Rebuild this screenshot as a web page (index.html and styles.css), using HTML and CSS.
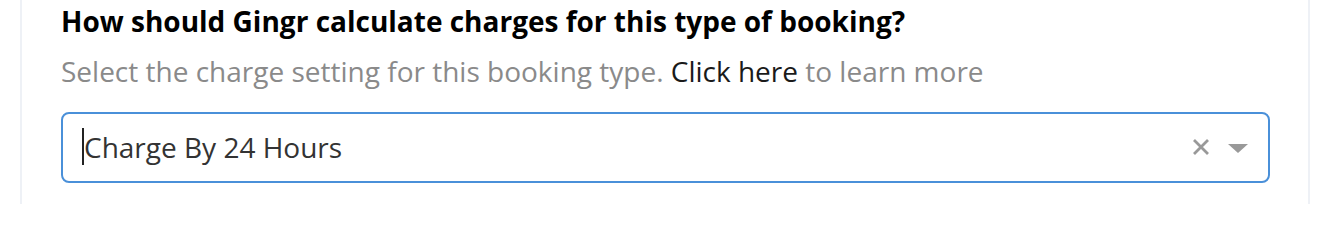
FILE: index.html
```html
<!DOCTYPE html>
<html>
<head>
<meta charset="utf-8">
<link rel="stylesheet" href="styles.css">
</head>
<body>
<div class="panel">
  <h2 class="title">How should Gingr calculate charges for this type of booking?</h2>
  <p class="hint">Select the charge setting for this booking type. <a class="link">Click here</a> to learn more</p>
  <div class="select">
    <span class="caret"></span>
    <span class="value">Charge By 24 Hours</span>
    <span class="icons">
      <svg class="clear" width="16" height="16" viewBox="0 0 16 16"><path d="M1 1L15 15M15 1L1 15" stroke="#999" stroke-width="2.8"/></svg>
      <svg class="arrow" width="20" height="9" viewBox="0 0 20 9"><path d="M0 0H20L10 9Z" fill="#999"/></svg>
    </span>
  </div>
</div>
</body>
</html>
```
FILE: styles.css
```css
html, body {
  margin: 0;
  padding: 0;
  background: #fff;
}
body {
  font-family: "Open Sans", "Liberation Sans", sans-serif;
}
.panel {
  margin-left: 20px;
  width: 1290px;
  height: 204px;
  box-sizing: border-box;
  border-left: 2px solid #eef1f6;
  border-right: 2px solid #eef1f6;
  padding: 2px 38px 0 39px;
}
.title {
  margin: 0;
  font-size: 28px;
  font-weight: 700;
  color: #000;
  line-height: 38px;
}
.hint {
  margin: 12px 0 0 0;
  font-size: 28px;
  line-height: 38px;
  color: #8a8a8a;
}
.link {
  color: #1a1a1a;
  text-decoration: none;
}
.select {
  margin-top: 22px;
  height: 71px;
  box-sizing: border-box;
  border: 2px solid #4a90d9;
  border-radius: 8px;
  display: flex;
  align-items: center;
  padding: 0 20px 2px 19px;
}
.caret {
  width: 2px;
  height: 37px;
  background: #222;
  margin-right: 0;
}
.value {
  font-size: 28px;
  color: #333;
  flex: 1;
}
.icons {
  display: flex;
  align-items: center;
  gap: 19px;
}
.clear {
  display: block;
}
.arrow {
  display: block;
  margin-top: 4px;
}
```
